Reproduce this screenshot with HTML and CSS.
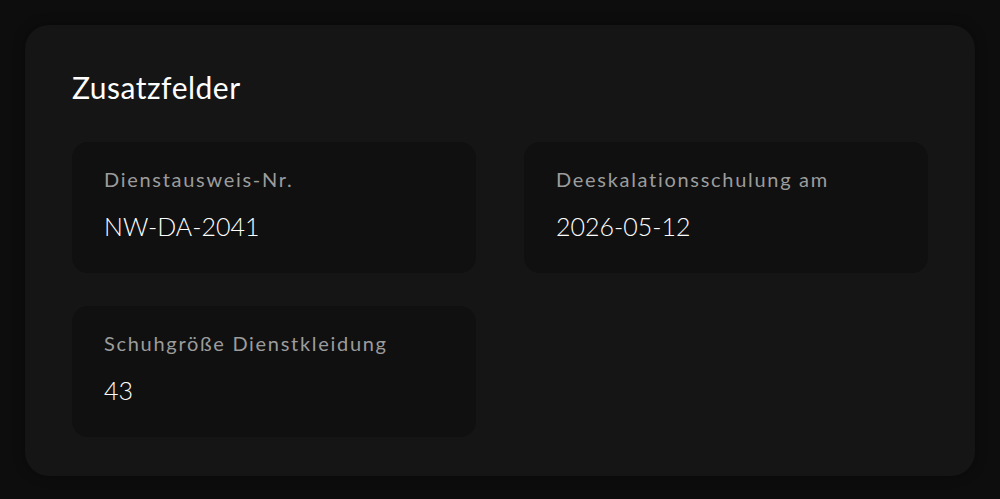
FILE: index.html
```html
<!DOCTYPE html>
<html lang="de">

<head>
  <meta charset="UTF-8">
  <meta name="viewport" content="width=device-width, initial-scale=1.0">
  <title>Zusatzfelder</title>
  <link rel="stylesheet" href="styles.css">
</head>

<body>
  <section class="panel">
    <h2 class="panel-title">Zusatzfelder</h2>
    <div class="field-grid">
      <div class="field">
        <div class="field-label">Dienstausweis-Nr.</div>
        <div class="field-value">NW-DA-2041</div>
      </div>
      <div class="field">
        <div class="field-label">Deeskalationsschulung am</div>
        <div class="field-value">2026-05-12</div>
      </div>
      <div class="field">
        <div class="field-label">Schuhgröße Dienstkleidung</div>
        <div class="field-value">43</div>
      </div>
    </div>
  </section>
</body>

</html>
```

FILE: styles.css
```css
/* Reset margin/padding */
* {
  margin: 0;
  padding: 0;
  box-sizing: border-box;
}

html,
body {
  height: 100%;
  background: #0d0d0d;
  font-family: Lato, "Noto Sans", sans-serif;
  color: #fff;
}

body {
  padding: 25px;
}

/* Outer card */
.panel {
  background: #151515;
  border-radius: 24px;
  padding: 44px 47px 39px;
  box-shadow: 0 0 12px rgba(0, 0, 0, 0.35);
}

.panel-title {
  font-size: 30px;
  font-weight: 400;
  line-height: 36px;
  letter-spacing: 0.5px;
  margin-bottom: 37px;
}

/* Two columns of fields */
.field-grid {
  display: grid;
  grid-template-columns: 1fr 1fr;
  column-gap: 48px;
  row-gap: 33px;
}

.field {
  background: #101010;
  border-radius: 16px;
  padding: 24px 32px 28px;
  height: 131px;
}

.field-label {
  font-size: 20px;
  color: #9c9c9c;
  letter-spacing: 1.7px;
  line-height: 26px;
  margin-bottom: 19px;
}

.field-value {
  font-size: 25px;
  font-weight: 300;
  line-height: 30px;
}
```
